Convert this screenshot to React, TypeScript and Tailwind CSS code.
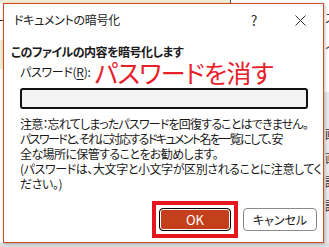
import React from 'react';

const notes = [
  { text: '注意：忘れてしまったパスワードを回復することはできません。', cls: 'tracking-[-0.8px]' },
  { text: 'パスワードと、それに対応するドキュメント名を一覧にして、安', cls: 'tracking-[-1.6px]' },
  { text: '全な場所に保管することをお勧めします。', cls: 'tracking-[-0.6px]' },
  { text: '(パスワードは、大文字と小文字が区別されることに注意してく', cls: 'tracking-[-0.4px]' },
  { text: 'ださい。)', cls: 'tracking-[-0.4px]' },
];

const App: React.FC = () => {
  return (
    <div
      className="relative w-[329px] h-[247px] overflow-hidden bg-white text-[#1a1a1a] [font-feature-settings:'palt']"
      style={{ fontFamily: '"Noto Sans CJK JP", "Noto Sans", sans-serif' }}
    >
      {/* desktop behind the dialog */}
      <div className="absolute left-0 top-0 w-[230px] h-[3px] bg-[#f3ecd5]" />
      <div className="absolute left-[230px] top-0 w-px h-[3px] bg-[#555]" />
      <div className="absolute left-0 top-[20px] w-[3px] h-px bg-[#333]" />
      <div className="absolute left-0 top-[40px] w-[3px] h-[29px] bg-[#f3ecd5]" />
      <div className="absolute left-[324px] top-[92px] w-[5px] h-[155px] bg-[#e9e9e9]" />
      <div className="absolute left-0 top-[243px] w-[329px] h-[4px] bg-[#dedede]" />
      <div className="absolute left-[325px] top-[12px] flex flex-col gap-[14px] text-[12px] leading-none text-[#333]">
        <span>ス</span>
        <span>ノ</span>
      </div>
      <div className="absolute left-[325px] top-[128px] flex flex-col gap-[12px] text-[12px] leading-none text-[#333]">
        <span>画</span>
        <span>直</span>
        <span>語</span>
        <span>語</span>
      </div>

      <div className="pl-[3px] pt-[3px]">
        <div className="relative flex flex-col w-[321px] h-[240px] bg-white border border-[#cf4b26] shadow-[1px_1px_3px_rgba(0,0,0,0.25)]">
          {/* title bar */}
          <div className="flex items-center h-[32px]">
            <span className="pl-[10px] text-[12px] tracking-[-0.3px] text-[#222]">ドキュメントの暗号化</span>
            <div className="ml-auto flex h-full">
              <div className="w-[46px] flex items-center justify-center text-[14px] text-[#333]">?</div>
              <div className="w-[46px] flex items-center justify-center">
                <svg width="11" height="11" viewBox="0 0 11 11">
                  <path d="M0.5 0.5 L10.5 10.5 M10.5 0.5 L0.5 10.5" stroke="#333" strokeWidth="1" />
                </svg>
              </div>
            </div>
          </div>

          <div className="mt-[8px] pl-[7px] text-[12px] leading-[16px] font-bold tracking-[-0.5px] whitespace-nowrap">
            このファイルの内容を暗号化します
          </div>

          <div className="flex items-center h-[24px] pl-[16px] whitespace-nowrap">
            <span className="text-[12px] tracking-[-0.3px]">
              パスワード(<span className="underline underline-offset-2">R</span>):
            </span>
            <span className="ml-[4px] text-[25px] leading-[24px] tracking-[-0.6px] text-[#e8202a]">パスワードを消す</span>
          </div>

          <div className="mt-[4px] ml-[16px] w-[288px] h-[21px] rounded-[3px] border-2 border-[#111] bg-[#f3f3f3]" />

          <div className="mt-[7px] pl-[16px] flex flex-col text-[12px] leading-[15px] whitespace-nowrap">
            {notes.map(line => (
              <span key={line.text} className={line.cls}>{line.text}</span>
            ))}
          </div>

          <div className="mt-[10px] flex items-center justify-end pr-[6px] gap-[5px]">
            <div className="border-4 border-[#e5161e] p-[3px]">
              <button className="w-[72px] h-[23px] rounded-[4px] border border-black bg-[#c43f1c] shadow-[inset_0_0_0_1px_white] text-[13px] text-white flex items-center justify-center">
                OK
              </button>
            </div>
            <button className="w-[74px] h-[23px] rounded-[4px] border border-[#8a8a8a] bg-white text-[12px] text-[#1a1a1a] flex items-center justify-center">
              キャンセル
            </button>
          </div>
        </div>
      </div>
    </div>
  );
};

export default App;
